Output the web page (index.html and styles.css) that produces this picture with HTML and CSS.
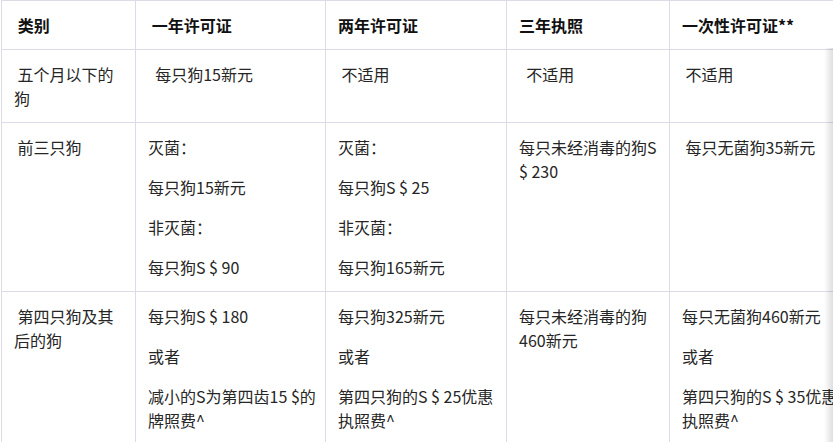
FILE: index.html
```html
<!DOCTYPE html>
<html lang="zh">
<head>
<meta charset="utf-8">
<title>狗牌照费用</title>
<link rel="stylesheet" href="styles.css">
</head>
<body>
<div class="scroller">
  <table class="fees">
    <colgroup>
      <col class="c1"><col class="c2"><col class="c3"><col class="c4"><col class="c5">
    </colgroup>
    <thead>
      <tr>
        <th>&nbsp;类别</th>
        <th>&nbsp;一年许可证</th>
        <th>两年许可证</th>
        <th>三年执照</th>
        <th>一次性许可证**</th>
      </tr>
    </thead>
    <tbody>
      <tr>
        <td>&nbsp;五个月以下的狗</td>
        <td>&nbsp;&nbsp;每只狗15新元</td>
        <td>&nbsp;不适用</td>
        <td>&nbsp;&nbsp;不适用</td>
        <td>&nbsp;不适用</td>
      </tr>
      <tr>
        <td>&nbsp;前三只狗</td>
        <td>
          <p>灭菌：</p>
          <p>每只狗15新元</p>
          <p>非灭菌：</p>
          <p>每只狗S $ 90</p>
        </td>
        <td>
          <p>灭菌：</p>
          <p>每只狗S $ 25</p>
          <p>非灭菌：</p>
          <p>每只狗165新元</p>
        </td>
        <td>每只未经消毒的狗S $ 230</td>
        <td>&nbsp;每只无菌狗35新元</td>
      </tr>
      <tr>
        <td>&nbsp;第四只狗及其后的狗</td>
        <td>
          <p>每只狗S $ 180</p>
          <p>或者</p>
          <p>减小的S为第四齿15 $的牌照费^</p>
        </td>
        <td>
          <p>每只狗325新元</p>
          <p>或者</p>
          <p>第四只狗的S $ 25优惠执照费^</p>
        </td>
        <td>每只未经消毒的狗460新元</td>
        <td>
          <p>每只无菌狗460新元</p>
          <p>或者</p>
          <p>第四只狗的S $ 35优惠执照费^</p>
        </td>
      </tr>
    </tbody>
  </table>
  <div class="edge-shadow"></div>
</div>
</body>
</html>
```
FILE: styles.css
```css
html, body {
  margin: 0;
  padding: 0;
  background: #ffffff;
}

body {
  font-family: "Noto Sans CJK SC", "Noto Sans", sans-serif;
  font-size: 16px;
  line-height: 24px;
  color: #262626;
}

.scroller {
  position: relative;
  width: 833px;
  height: 442px;
  overflow: hidden;
  padding-left: 1px;
  box-sizing: border-box;
}

.fees {
  border-collapse: collapse;
  table-layout: fixed;
  width: 848px;
}

.c1 { width: 134px; }
.c2 { width: 190px; }
.c3 { width: 181px; }
.c4 { width: 163px; }
.c5 { width: 180px; }

.fees th,
.fees td {
  border: 1px solid #dcdce8;
  padding: 12px 4px 12px 12px;
  vertical-align: top;
  text-align: left;
}

.fees th:first-child,
.fees td:first-child {
  padding-right: 12px;
}

.fees th {
  font-weight: 700;
  color: #111111;
}

.fees p {
  margin: 0;
}

.fees p + p {
  margin-top: 16px;
}

.edge-shadow {
  position: absolute;
  top: 48px;
  right: 0;
  bottom: 0;
  width: 9px;
  background: linear-gradient(to right, rgba(0, 0, 0, 0), rgba(0, 0, 0, 0.13));
}
```
